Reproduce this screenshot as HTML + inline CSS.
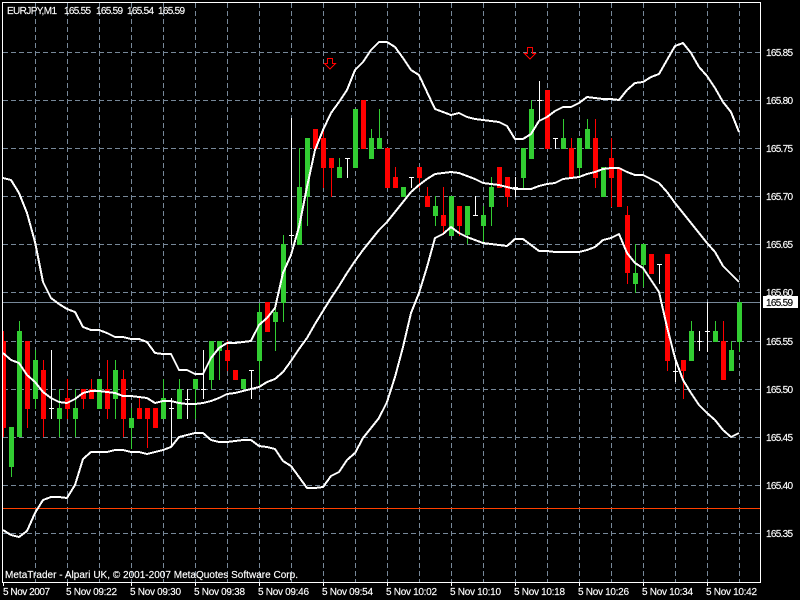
<!DOCTYPE html>
<html><head><meta charset="utf-8"><style>
html,body{margin:0;padding:0;background:#000}
svg{display:block}
text{font-family:"Liberation Sans",sans-serif;font-size:10px;fill:#fff;stroke:#fff;stroke-width:.15}
</style></head><body>
<svg width="800" height="600" viewBox="0 0 800 600" xmlns="http://www.w3.org/2000/svg">
<rect width="800" height="600" fill="#000"/>
<g shape-rendering="crispEdges">
<path fill="none" stroke="#778899" stroke-dasharray="5 3" d="M3 52.5H760M3 100.5H760M3 148.5H760M3 196.5H760M3 244.5H760M3 292.5H760M3 341.5H760M3 389.5H760M3 437.5H760M3 485.5H760M3 533.5H760M35.5 3V582M67.5 3V582M99.5 3V582M131.5 3V582M163.5 3V582M195.5 3V582M227.5 3V582M259.5 3V582M291.5 3V582M323.5 3V582M355.5 3V582M387.5 3V582M419.5 3V582M451.5 3V582M483.5 3V582M515.5 3V582M547.5 3V582M579.5 3V582M611.5 3V582M643.5 3V582M675.5 3V582M707.5 3V582M739.5 3V582"/>
<path stroke="#778899" d="M3 302.5H760"/>
<path stroke="#ff4000" d="M3 508.5H760"/>
<path fill="none" stroke="#32cd32" d="M11.5 427V477M19.5 321V437M35.5 350V409M59.5 389V437M75.5 389V437M115.5 360V419M131.5 408V449M163.5 379V419M179.5 379V419M195.5 379V419M211.5 341V389M219.5 341V380M259.5 303V385M275.5 302V351M283.5 235V322M299.5 148V245M307.5 138V226M339.5 158V178M371.5 129V159M379.5 109V149M435.5 196V226M467.5 206V244M483.5 206V244M491.5 177V226M523.5 148V188M531.5 100V159M563.5 119V149M579.5 138V176M587.5 119V149M635.5 244V293M643.5 244V287M691.5 321V361M715.5 321V342M731.5 341V371M739.5 302V352"/>
<path fill="none" stroke="#32cd32" stroke-width="5" d="M11.5 427V467M19.5 331V437M35.5 360V399M59.5 408V419M75.5 408V419M99.5 379V409M115.5 370V399M131.5 418V428M163.5 398V419M179.5 389V419M195.5 379V389M211.5 341V380M219.5 341V351M243.5 379V389M259.5 312V361M275.5 312V322M283.5 244V303M299.5 187V245M307.5 138V197M339.5 167V178M355.5 109V168M371.5 138V159M379.5 138V149M403.5 187V197M435.5 206V216M451.5 196V236M467.5 206V235M483.5 215V226M491.5 187V207M523.5 148V178M531.5 109V159M563.5 138V149M579.5 138V168M587.5 129V149M603.5 167V197M635.5 273V284M643.5 244V265M691.5 331V361M715.5 331V342M731.5 350V371M739.5 302V342"/>
<path fill="none" stroke="#ff0000" d="M3.5 331V437M27.5 341V428M43.5 360V437M67.5 379V419M83.5 389V409M91.5 379V399M107.5 360V419M123.5 370V437M139.5 398V419M147.5 408V448M227.5 341V371M323.5 129V188M331.5 158V197M395.5 167V188M419.5 167V188M427.5 187V207M443.5 187V235M459.5 206V236M507.5 177V207M571.5 138V178M595.5 119V188M611.5 138V207M627.5 206V284M667.5 254V371M683.5 360V399M723.5 321V380"/>
<path fill="none" stroke="#ff0000" stroke-width="5" d="M27.5 341V409M43.5 370V419M67.5 398V409M83.5 389V399M91.5 389V399M107.5 389V409M123.5 379V419M139.5 408V419M147.5 408V419M155.5 408V428M227.5 350V361M235.5 370V380M267.5 302V332M315.5 129V149M323.5 138V168M331.5 158V168M363.5 100V149M387.5 148V188M395.5 177V188M419.5 167V178M427.5 196V207M443.5 215V226M459.5 206V226M499.5 167V188M507.5 177V197M547.5 90V149M571.5 148V178M595.5 138V178M611.5 158V178M619.5 168V207M627.5 215V273M651.5 254V274M667.5 254V361M683.5 360V371M723.5 341V380"/>
<rect x="3" y="341" width="3" height="87" fill="#ff0000"/>
<path fill="none" stroke="#fff" d="M51.5 350V419M49 408.5h5M171.5 398V447M169 408.5h5M187.5 389V419M185 399.5h5M203.5 350V399M201 389.5h5M251.5 370V399M249 370.5h5M291.5 118V245M289 235.5h5M347.5 158V178M345 158.5h5M411.5 177V188M409 177.5h5M475.5 196V216M473 215.5h5M515.5 177V197M513 187.5h5M539.5 81V120M537 100.5h5M555.5 138V149M553 138.5h5M659.5 264V284M657 264.5h5M675.5 360V382M673 371.5h5M699.5 331V351M697 341.5h5M707.5 302V352M705 331.5h5"/>
<g fill="none" stroke="#fff" stroke-width="2" stroke-linejoin="round">
<polyline points="3,178 11,180 19,193 27,213 35,242 43,282 51,298 59,304 67,309 75,312 83,327 91,330 99,330 107,333 115,337 123,337 131,339 139,339 147,342 155,353 163,354 171,354 179,370 187,370 195,374 203,374 211,358 219,348 227,343 235,343 243,342 251,341 259,325 267,318 275,308 283,273 291,255 299,227 307,187 315,150 323,130 331,113 339,102 347,90 355,70 363,62 371,50 379,42 387,42 395,47 403,58 411,70 419,75 427,92 435,109 443,112 451,115 459,113 467,117 475,119 483,120 491,121 499,122 507,126 515,139 523,139 531,134 539,121 547,117 555,111 563,107 571,107 579,103 587,97 595,98 603,99 611,99 619,100 627,90 635,83 643,82 651,77 659,74 667,60 675,46 683,43 691,53 699,67 707,76 715,88 723,102 731,112 739,132"/>
<polyline points="3,353 11,360 19,363 27,375 35,382 43,392 51,398 59,402 67,403 75,399 83,393 91,391 99,391 107,392 115,393 123,396 131,396 139,397 147,398 155,403 163,401 171,401 179,403 187,404 195,404 203,403 211,401 219,398 227,394 235,393 243,391 251,389 259,387 267,382 275,379 283,372 291,361 299,349 307,338 315,324 323,311 331,298 339,286 347,273 355,261 363,250 371,240 379,230 387,222 395,212 403,202 411,192 419,185 427,179 435,174 443,173 451,172 459,173 467,176 475,179 483,183 491,184 499,185 507,187 515,189 523,189 531,189 539,186 547,184 555,183 563,179 571,178 579,177 587,174 595,172 603,169 611,168 619,168 627,172 635,175 643,175 651,179 659,183 667,192 675,203 683,213 691,223 699,233 707,243 715,252 723,266 731,274 739,282"/>
<polyline points="3,530 11,535 19,537 27,531 35,513 43,500 51,497 59,497 67,498 75,485 83,459 91,452 99,452 107,452 115,450 123,450 131,452 139,452 147,454 155,452 163,450 171,447 179,437 187,435 195,433 203,433 211,440 219,442 227,442 235,441 243,440 251,440 259,446 267,447 275,449 283,461 291,466 299,477 307,488 315,488 323,487 331,476 339,472 347,460 355,453 363,438 371,428 379,418 387,402 395,377 403,347 411,313 419,293 427,267 435,238 443,234 451,227 459,233 467,237 475,240 483,243 491,244 499,245 507,246 515,239 523,239 531,245 539,251 547,251 555,252 563,252 571,252 579,252 587,250 595,247 603,240 611,238 619,234 627,253 635,263 643,268 651,280 659,292 667,327 675,358 683,380 691,393 699,405 707,413 715,420 723,430 731,437 739,433"/>
</g>
<path fill="none" stroke="#ff0000" d="M327.5 58.5h5v5h3l-5.5 5.5l-5.5-5.5h3z"/>
<path fill="none" stroke="#ff0000" d="M527.5 47.5h5v6h3l-5.5 5.5l-5.5-5.5h3z"/>
<path fill="none" stroke="#fff" d="M2.5 2V583M2 2.5H761M760.5 2V583M2 582.5H761M3.5 583V586M67.5 583V586M131.5 583V586M195.5 583V586M259.5 583V586M323.5 583V586M387.5 583V586M451.5 583V586M515.5 583V586M579.5 583V586M643.5 583V586M707.5 583V586"/>
<rect x="763" y="296" width="35" height="12" fill="#fff"/>
</g>
<text x="7" y="14" textLength="50">EURJPY,M1</text>
<text x="64" y="14" textLength="27">165.55</text>
<text x="96" y="14" textLength="27">165.59</text>
<text x="127" y="14" textLength="27">165.54</text>
<text x="158" y="14" textLength="27">165.59</text>
<text x="5" y="578" textLength="293">MetaTrader - Alpari UK, © 2001-2007 MetaQuotes Software Corp.</text>
<text x="766" y="56" textLength="27">165.85</text>
<text x="766" y="104" textLength="27">165.80</text>
<text x="766" y="152" textLength="27">165.75</text>
<text x="766" y="200" textLength="27">165.70</text>
<text x="766" y="248" textLength="27">165.65</text>
<text x="766" y="296" textLength="27">165.60</text>
<text x="766" y="306" textLength="27" style="fill:#000;stroke:#000">165.59</text>
<text x="766" y="345" textLength="27">165.55</text>
<text x="766" y="393" textLength="27">165.50</text>
<text x="766" y="441" textLength="27">165.45</text>
<text x="766" y="489" textLength="27">165.40</text>
<text x="766" y="537" textLength="27">165.35</text>
<text x="3" y="595" textLength="47">5 Nov 2007</text>
<text x="66" y="595" textLength="51">5 Nov 09:22</text>
<text x="130" y="595" textLength="51">5 Nov 09:30</text>
<text x="194" y="595" textLength="51">5 Nov 09:38</text>
<text x="258" y="595" textLength="51">5 Nov 09:46</text>
<text x="322" y="595" textLength="51">5 Nov 09:54</text>
<text x="386" y="595" textLength="51">5 Nov 10:02</text>
<text x="450" y="595" textLength="51">5 Nov 10:10</text>
<text x="514" y="595" textLength="51">5 Nov 10:18</text>
<text x="578" y="595" textLength="51">5 Nov 10:26</text>
<text x="642" y="595" textLength="51">5 Nov 10:34</text>
<text x="706" y="595" textLength="51">5 Nov 10:42</text>
</svg>
</body></html>
